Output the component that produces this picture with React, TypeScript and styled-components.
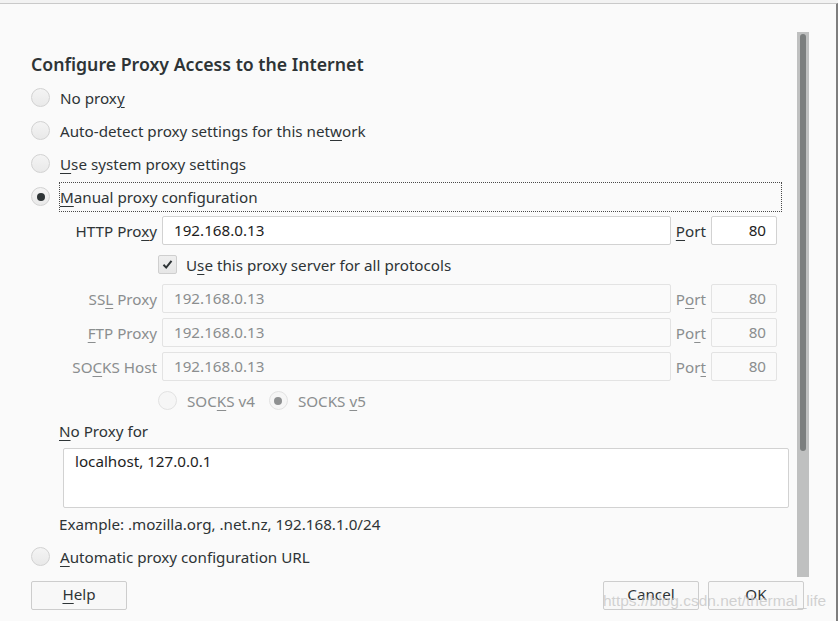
import React from "react";
import styled, { createGlobalStyle } from "styled-components";

const Global = createGlobalStyle`
  html, body { margin: 0; padding: 0; background: #f2f2f2; }
  body { font-family: "Noto Sans", "Open Sans", sans-serif; color: #2e3436; }
  * { box-sizing: border-box; }
`;

const TEXT = "#2e3436";
const DIS = "#8b8e8f";
const FS = "15.2px";

const Window = styled.div`
  position: relative;
  width: 838px;
  height: 621px;
  padding-top: 3px;
  display: flex;
  flex-direction: column;
  overflow: hidden;
`;

const Frame = styled.div`
  flex: 1;
  display: flex;
  flex-direction: column;
  background: #fafafa;
  border-top: 1px solid #c9c9c9;
  border-right: 2px solid #7e7e7e;
`;

const Body = styled.div`
  height: 573px;
  display: flex;
`;

const Content = styled.div`
  flex: 1;
  overflow: hidden;
  padding: 43px 8px 0 31px;
  display: flex;
  flex-direction: column;
`;

const Heading = styled.div`
  height: 34px;
  display: flex;
  align-items: center;
  font-size: 17.7px;
  font-weight: 600;
  color: ${TEXT};
  padding-bottom: 1px;
`;

const RadioRow = styled.label`
  height: 33px;
  display: flex;
  align-items: center;
  gap: 10px;
  font-size: ${FS};
  color: ${TEXT};
`;

const RadioCircle = styled.span<{ $checked?: boolean; $disabled?: boolean }>`
  width: 19px;
  height: 19px;
  border-radius: 50%;
  flex: none;
  border: 1px solid ${(p) => (p.$disabled ? "#e2e2e2" : "#d2d2d2")};
  background: ${(p) =>
    p.$disabled ? "#f6f6f6" : "linear-gradient(#f4f4f4, #e9e9e9)"};
  display: flex;
  align-items: center;
  justify-content: center;
  &::after {
    content: "";
    display: ${(p) => (p.$checked ? "block" : "none")};
    width: 8px;
    height: 8px;
    border-radius: 50%;
    background: ${(p) => (p.$disabled ? "#8f9192" : "#2e3436")};
  }
`;

const FocusLabel = styled.span`
  flex: 1;
  height: 30px;
  margin-left: -1px;
  margin-right: 7px;
  display: flex;
  align-items: center;
  border: 1px dotted #4a4a4a;
`;

const Mn = styled.span`
  text-decoration: underline;
  text-underline-offset: 3px;
  text-decoration-thickness: 1px;
`;

const ProxyGrid = styled.div`
  margin-top: 3px;
  margin-left: 28px;
  margin-right: 12px;
  display: grid;
  grid-template-columns: 98px 1fr auto 66px;
  grid-auto-rows: 29px;
  column-gap: 5px;
  row-gap: 5px;
  align-items: center;
`;

const FieldLabel = styled.span<{ $disabled?: boolean; $left?: boolean }>`
  font-size: ${FS};
  text-align: ${(p) => (p.$left ? "left" : "right")};
  color: ${(p) => (p.$disabled ? DIS : TEXT)};
  white-space: nowrap;
`;

const Field = styled.div<{ $disabled?: boolean; $right?: boolean }>`
  height: 29px;
  display: flex;
  align-items: center;
  justify-content: ${(p) => (p.$right ? "flex-end" : "flex-start")};
  padding: 0 ${(p) => (p.$right ? "10px" : "11px")};
  border: 1px solid ${(p) => (p.$disabled ? "#e3e3e3" : "#d2d2d2")};
  border-radius: 2px;
  background: ${(p) => (p.$disabled ? "#fafafa" : "#ffffff")};
  color: ${(p) => (p.$disabled ? DIS : "#1e1e1e")};
  font-size: ${FS};
  padding-bottom: 1px;
`;

const SpanRow = styled.div`
  grid-column: 2 / 5;
  display: flex;
  align-items: center;
  margin-left: -4px;
  gap: 9px;
  font-size: ${FS};
`;

const CheckBox = styled.span`
  width: 19px;
  height: 19px;
  flex: none;
  border: 1px solid #cfcfcf;
  border-radius: 2px;
  background: linear-gradient(#efefef, #e6e6e6);
  display: flex;
  align-items: center;
  justify-content: center;
`;

const SocksOpt = styled.span`
  display: flex;
  align-items: center;
  gap: 10px;
  color: ${DIS};
  margin-right: 5px;
`;

const SubLabel = styled.div`
  height: 30px;
  margin-top: 1px;
  margin-left: 28px;
  display: flex;
  align-items: center;
  font-size: ${FS};
  color: ${TEXT};
`;

const TextArea = styled.div`
  height: 60px;
  margin: 2px 0 0 32px;
  border: 1px solid #d2d2d2;
  border-radius: 2px;
  background: #ffffff;
  padding: 2px 11px;
  font-size: ${FS};
  line-height: 20px;
  color: #1e1e1e;
`;

const Hint = styled.div`
  height: 32px;
  margin-left: 28px;
  display: flex;
  align-items: center;
  font-size: ${FS};
  color: ${TEXT};
`;

const ScrollTrack = styled.div`
  width: 12px;
  margin: 28px 27px 0 0;
  background: #bfc0c0;
  padding: 2px 3px 0;
  display: flex;
  flex-direction: column;
`;

const ScrollThumb = styled.div`
  height: 417px;
  background: #7b7e7e;
  border-radius: 3px;
`;

const Footer = styled.div`
  flex: 1;
  display: flex;
  align-items: flex-start;
  padding: 4px 32px 0 31px;
  gap: 9px;
`;

const Button = styled.button`
  width: 96px;
  height: 29px;
  border: 1px solid #cdcdcd;
  border-radius: 2px;
  background: #f8f8f8;
  font-family: inherit;
  font-size: ${FS};
  color: ${TEXT};
  padding: 0 0 3px;
`;

const Spacer = styled.div`
  flex: 1;
`;

const Watermark = styled.span`
  position: absolute;
  left: 603px;
  top: 592px;
  font-family: "Liberation Sans", Arial, sans-serif;
  font-size: 15.5px;
  color: rgba(195, 195, 195, 0.75);
  pointer-events: none;
  white-space: nowrap;
`;

const Check = () => (
  <svg width="13" height="13" viewBox="0 0 13 13">
    <path d="M2.5 6.8 L5.2 9.6 L10.5 2.8" fill="none" stroke="#2e3436" strokeWidth="2" />
  </svg>
);

export default function App() {
  return (
    <>
      <Global />
      <Window>
        <Frame>
          <Body>
            <Content>
              <Heading>Configure Proxy Access to the Internet</Heading>
              <RadioRow>
                <RadioCircle />
                <span>
                  No prox<Mn>y</Mn>
                </span>
              </RadioRow>
              <RadioRow>
                <RadioCircle />
                <span>
                  Auto-detect proxy settings for this net<Mn>w</Mn>ork
                </span>
              </RadioRow>
              <RadioRow>
                <RadioCircle />
                <span>
                  <Mn>U</Mn>se system proxy settings
                </span>
              </RadioRow>
              <RadioRow>
                <RadioCircle $checked />
                <FocusLabel>
                  <Mn>M</Mn>anual proxy configuration
                </FocusLabel>
              </RadioRow>

              <ProxyGrid>
                <FieldLabel>
                  HTTP Pro<Mn>x</Mn>y
                </FieldLabel>
                <Field>192.168.0.13</Field>
                <FieldLabel $left>
                  <Mn>P</Mn>ort
                </FieldLabel>
                <Field $right>80</Field>

                <span />
                <SpanRow>
                  <CheckBox>
                    <Check />
                  </CheckBox>
                  <span>
                    U<Mn>s</Mn>e this proxy server for all protocols
                  </span>
                </SpanRow>

                <FieldLabel $disabled>
                  SS<Mn>L</Mn> Proxy
                </FieldLabel>
                <Field $disabled>192.168.0.13</Field>
                <FieldLabel $disabled $left>
                  P<Mn>o</Mn>rt
                </FieldLabel>
                <Field $disabled $right>80</Field>

                <FieldLabel $disabled>
                  <Mn>F</Mn>TP Proxy
                </FieldLabel>
                <Field $disabled>192.168.0.13</Field>
                <FieldLabel $disabled $left>
                  Po<Mn>r</Mn>t
                </FieldLabel>
                <Field $disabled $right>80</Field>

                <FieldLabel $disabled>
                  SO<Mn>C</Mn>KS Host
                </FieldLabel>
                <Field $disabled>192.168.0.13</Field>
                <FieldLabel $disabled $left>
                  Por<Mn>t</Mn>
                </FieldLabel>
                <Field $disabled $right>80</Field>

                <span />
                <SpanRow>
                  <SocksOpt>
                    <RadioCircle $disabled />
                    <span>
                      SOC<Mn>K</Mn>S v4
                    </span>
                  </SocksOpt>
                  <SocksOpt>
                    <RadioCircle $disabled $checked />
                    <span>
                      SOCKS <Mn>v</Mn>5
                    </span>
                  </SocksOpt>
                </SpanRow>
              </ProxyGrid>

              <SubLabel>
                <span>
                  <Mn>N</Mn>o Proxy for
                </span>
              </SubLabel>
              <TextArea>localhost, 127.0.0.1</TextArea>
              <Hint>Example: .mozilla.org, .net.nz, 192.168.1.0/24</Hint>
              <RadioRow>
                <RadioCircle />
                <span>
                  <Mn>A</Mn>utomatic proxy configuration URL
                </span>
              </RadioRow>
            </Content>
            <ScrollTrack>
              <ScrollThumb />
            </ScrollTrack>
          </Body>
          <Footer>
            <Button>
              <Mn>H</Mn>elp
            </Button>
            <Spacer />
            <Button>Cancel</Button>
            <Button>OK</Button>
          </Footer>
        </Frame>
        <Watermark>https://blog.csdn.net/thermal_life</Watermark>
      </Window>
    </>
  );
}
